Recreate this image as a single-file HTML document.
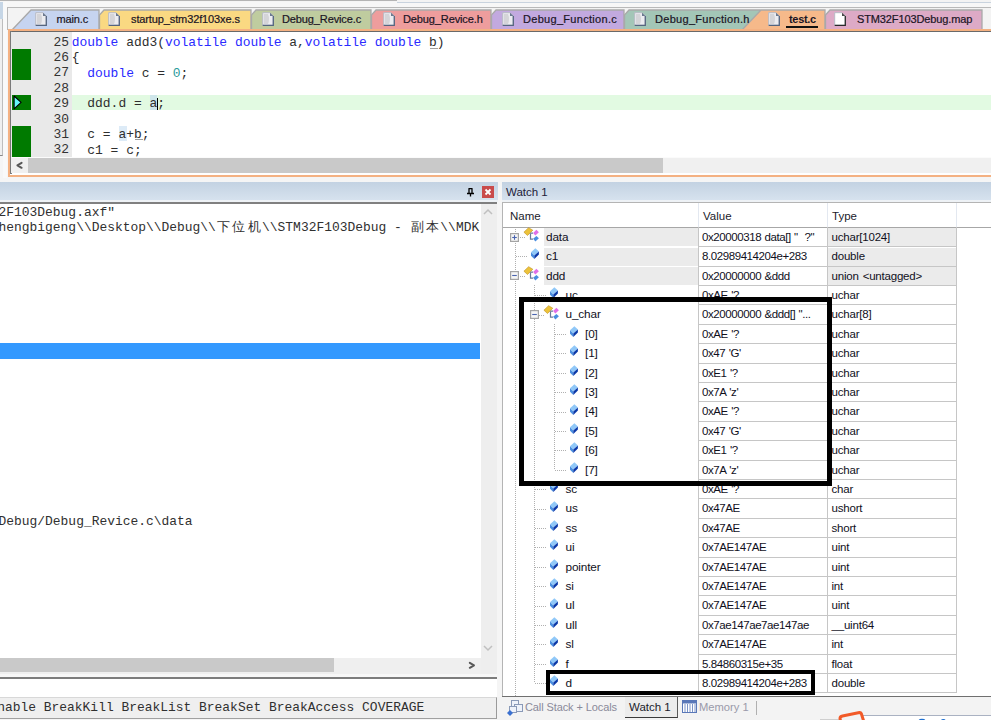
<!DOCTYPE html><html><head><meta charset="utf-8"><style>
html,body{margin:0;padding:0;}
body{width:991px;height:720px;overflow:hidden;position:relative;background:#f5f5f5;font-family:'Liberation Sans', sans-serif;}
div{box-sizing:border-box;}
.ui{font-family:'Liberation Sans', sans-serif;font-size:11px;color:#1b1b1b;line-height:14px;}
.mono{font-family:'Liberation Mono', monospace;font-size:12.95px;line-height:15.4px;color:#1a1a1a;}
.kw{color:#2a2aff;}
</style></head><body>
<div style="position:absolute;left:0px;top:0px;width:397.5px;height:1.4px;background:#f2f2f2;border-bottom:1px solid #b4b4b4;border-right:1px solid #b4b4b4"></div>
<div style="position:absolute;left:0px;top:2px;width:991px;height:5px;background:#f7f7f7"></div>
<div style="position:absolute;left:397px;top:0px;width:594px;height:3px;background:#f3f3f3;border-top:0;border-bottom:1px solid #c9d3de"></div>
<div style="position:absolute;left:0px;top:2px;width:3px;height:17px;background:#c6d6e6"></div>
<div style="position:absolute;left:0px;top:19px;width:3px;height:137px;background:#efefef;border-right:1px solid #bdbdbd;border-bottom:1px solid #8a8a8a"></div>
<div style="position:absolute;left:3px;top:2px;width:4px;height:176px;background:#f9f9f9"></div>
<div style="position:absolute;left:7px;top:7px;width:984px;height:23px;background:#f3f3f3;border-top:1px solid #b9b9b9;border-left:1px solid #b9b9b9"></div>
<svg style="position:absolute;left:12px;top:10px;overflow:visible" width="87" height="20"><polygon points="0,20 19,0 87,0 87,20" fill="#c6d4f0" stroke="#a9a9a9" stroke-width="1.3" /><rect x="-1" y="19" width="89" height="2" fill="#c6d4f0"/></svg>
<svg style="position:absolute;left:99px;top:10px;overflow:visible" width="152" height="20"><polygon points="0.5,20 0.5,5 5,0 152,0 152,20" fill="#fad982" stroke="#a9a9a9" stroke-width="1.3" /><rect x="-1" y="19" width="154" height="2" fill="#fad982"/></svg>
<svg style="position:absolute;left:251px;top:10px;overflow:visible" width="120" height="20"><polygon points="0.5,20 0.5,5 5,0 120,0 120,20" fill="#bfcc9f" stroke="#a9a9a9" stroke-width="1.3" /><rect x="-1" y="19" width="122" height="2" fill="#bfcc9f"/></svg>
<svg style="position:absolute;left:371px;top:10px;overflow:visible" width="120" height="20"><polygon points="0.5,20 0.5,5 5,0 120,0 120,20" fill="#ee9d9d" stroke="#a9a9a9" stroke-width="1.3" /><rect x="-1" y="19" width="122" height="2" fill="#ee9d9d"/></svg>
<svg style="position:absolute;left:491px;top:10px;overflow:visible" width="133" height="20"><polygon points="0.5,20 0.5,5 5,0 133,0 133,20" fill="#c2a9df" stroke="#a9a9a9" stroke-width="1.3" /><rect x="-1" y="19" width="135" height="2" fill="#c2a9df"/></svg>
<svg style="position:absolute;left:624px;top:10px;overflow:visible" width="136" height="20"><polygon points="0.5,20 0.5,5 5,0 136,0 136,20" fill="#a3c6b7" stroke="#a9a9a9" stroke-width="1.3" /><rect x="-1" y="19" width="138" height="2" fill="#a3c6b7"/></svg>
<svg style="position:absolute;left:742px;top:10px;overflow:visible" width="83" height="20"><polygon points="0,20 19,0 83,0 83,20" fill="#f6b98a" stroke="#a9a9a9" stroke-width="1.3" /><rect x="-1" y="19" width="85" height="2" fill="#f6b98a"/></svg>
<svg style="position:absolute;left:825px;top:10px;overflow:visible" width="157" height="20"><polygon points="0.5,20 0.5,5 5,0 157,0 157,20" fill="#ddaac6" stroke="#a9a9a9" stroke-width="1.3" /><rect x="-1" y="19" width="159" height="2" fill="#ddaac6"/></svg>
<svg style="position:absolute;left:35.3px;top:12px;overflow:visible" width="12" height="14" viewBox="0 0 12 14"><path d="M0.7 0.7 H8 L11.3 4 V13.3 H0.7 Z" fill="#ececf0" stroke="#b8bcc6" stroke-width="1"/><path d="M2 2 H6 Q8 7 6 12 H2 Z" fill="#d4d4d8"/><path d="M8 0.7 L11.3 4 H8 Z" fill="#55657f" opacity="0.85"/><path d="M11.3 4 V13.3 H0.7" fill="none" stroke="#55657f" stroke-width="1.3"/></svg>
<div style="position:absolute;left:56.5px;top:12.2px;white-space:pre;font-family:'Liberation Sans', sans-serif;font-size:11px;line-height:14px;color:#1a1424;-webkit-text-stroke:0.2px #1a1424;letter-spacing:-0.12px;">main.c</div>
<svg style="position:absolute;left:108.3px;top:12px;overflow:visible" width="12" height="14" viewBox="0 0 12 14"><path d="M0.7 0.7 H8 L11.3 4 V13.3 H0.7 Z" fill="#ececf0" stroke="#b8bcc6" stroke-width="1"/><path d="M2 2 H6 Q8 7 6 12 H2 Z" fill="#d4d4d8"/><path d="M8 0.7 L11.3 4 H8 Z" fill="#55657f" opacity="0.85"/><path d="M11.3 4 V13.3 H0.7" fill="none" stroke="#55657f" stroke-width="1.3"/></svg>
<div style="position:absolute;left:131px;top:12.2px;white-space:pre;font-family:'Liberation Sans', sans-serif;font-size:11px;line-height:14px;color:#1a1424;-webkit-text-stroke:0.2px #1a1424;letter-spacing:-0.12px;">startup_stm32f103xe.s</div>
<svg style="position:absolute;left:262.3px;top:12px;overflow:visible" width="12" height="14" viewBox="0 0 12 14"><path d="M0.7 0.7 H8 L11.3 4 V13.3 H0.7 Z" fill="#ececf0" stroke="#b8bcc6" stroke-width="1"/><path d="M2 2 H6 Q8 7 6 12 H2 Z" fill="#d4d4d8"/><path d="M8 0.7 L11.3 4 H8 Z" fill="#55657f" opacity="0.85"/><path d="M11.3 4 V13.3 H0.7" fill="none" stroke="#55657f" stroke-width="1.3"/></svg>
<div style="position:absolute;left:282px;top:12.2px;white-space:pre;font-family:'Liberation Sans', sans-serif;font-size:11px;line-height:14px;color:#1a1424;-webkit-text-stroke:0.2px #1a1424;letter-spacing:-0.12px;">Debug_Revice.c</div>
<svg style="position:absolute;left:383.3px;top:12px;overflow:visible" width="12" height="14" viewBox="0 0 12 14"><path d="M0.7 0.7 H8 L11.3 4 V13.3 H0.7 Z" fill="#ececf0" stroke="#b8bcc6" stroke-width="1"/><path d="M2 2 H6 Q8 7 6 12 H2 Z" fill="#d4d4d8"/><path d="M8 0.7 L11.3 4 H8 Z" fill="#55657f" opacity="0.85"/><path d="M11.3 4 V13.3 H0.7" fill="none" stroke="#55657f" stroke-width="1.3"/></svg>
<div style="position:absolute;left:403px;top:12.2px;white-space:pre;font-family:'Liberation Sans', sans-serif;font-size:11px;line-height:14px;color:#1a1424;-webkit-text-stroke:0.2px #1a1424;letter-spacing:-0.12px;">Debug_Revice.h</div>
<svg style="position:absolute;left:502.3px;top:12px;overflow:visible" width="12" height="14" viewBox="0 0 12 14"><path d="M0.7 0.7 H8 L11.3 4 V13.3 H0.7 Z" fill="#ececf0" stroke="#b8bcc6" stroke-width="1"/><path d="M2 2 H6 Q8 7 6 12 H2 Z" fill="#d4d4d8"/><path d="M8 0.7 L11.3 4 H8 Z" fill="#55657f" opacity="0.85"/><path d="M11.3 4 V13.3 H0.7" fill="none" stroke="#55657f" stroke-width="1.3"/></svg>
<div style="position:absolute;left:523px;top:12.2px;white-space:pre;font-family:'Liberation Sans', sans-serif;font-size:11px;line-height:14px;color:#1a1424;-webkit-text-stroke:0.2px #1a1424;letter-spacing:0.3px;">Debug_Function.c</div>
<svg style="position:absolute;left:634.3px;top:12px;overflow:visible" width="12" height="14" viewBox="0 0 12 14"><path d="M0.7 0.7 H8 L11.3 4 V13.3 H0.7 Z" fill="#ececf0" stroke="#b8bcc6" stroke-width="1"/><path d="M2 2 H6 Q8 7 6 12 H2 Z" fill="#d4d4d8"/><path d="M8 0.7 L11.3 4 H8 Z" fill="#55657f" opacity="0.85"/><path d="M11.3 4 V13.3 H0.7" fill="none" stroke="#55657f" stroke-width="1.3"/></svg>
<div style="position:absolute;left:655px;top:12.2px;white-space:pre;font-family:'Liberation Sans', sans-serif;font-size:11px;line-height:14px;color:#1a1424;-webkit-text-stroke:0.2px #1a1424;letter-spacing:0.3px;">Debug_Function.h</div>
<svg style="position:absolute;left:768.3px;top:12px;overflow:visible" width="12" height="14" viewBox="0 0 12 14"><path d="M0.7 0.7 H8 L11.3 4 V13.3 H0.7 Z" fill="#ececf0" stroke="#b8bcc6" stroke-width="1"/><path d="M2 2 H6 Q8 7 6 12 H2 Z" fill="#d4d4d8"/><path d="M8 0.7 L11.3 4 H8 Z" fill="#55657f" opacity="0.85"/><path d="M11.3 4 V13.3 H0.7" fill="none" stroke="#55657f" stroke-width="1.3"/></svg>
<div style="position:absolute;left:789px;top:12.2px;white-space:pre;font-family:'Liberation Sans', sans-serif;font-size:11px;line-height:14px;color:#1a1424;font-weight:bold;letter-spacing:-0.3px;">test.c</div>
<svg style="position:absolute;left:834.3px;top:12px;overflow:visible" width="12" height="14" viewBox="0 0 12 14"><path d="M0.7 0.7 H8 L11.3 4 V13.3 H0.7 Z" fill="#ffffff" stroke="#b8bcc6" stroke-width="1"/><path d="M8 0.7 L11.3 4 H8 Z" fill="#2a2a2a" opacity="0.85"/><path d="M11.3 4 V13.3 H0.7" fill="none" stroke="#2a2a2a" stroke-width="1.3"/></svg>
<div style="position:absolute;left:857px;top:12.2px;white-space:pre;font-family:'Liberation Sans', sans-serif;font-size:11px;line-height:14px;color:#1a1424;-webkit-text-stroke:0.2px #1a1424;letter-spacing:-0.12px;">STM32F103Debug.map</div>
<div style="position:absolute;left:786px;top:26px;width:32px;height:1.6px;background:#111"></div>
<div style="position:absolute;left:8px;top:29px;width:991px;height:148px;border:2px solid #f4b182;border-right:0;background:#fff"></div>
<div style="position:absolute;left:10px;top:31px;width:981px;height:1px;background:#6a6a6a"></div>
<div style="position:absolute;left:10px;top:31px;width:1.5px;height:143px;background:#7a7a7a"></div>
<div style="position:absolute;left:11px;top:32px;width:61px;height:124.8px;background:#e9e9e9"></div>
<div style="position:absolute;left:11.5px;top:48.9px;width:19.5px;height:30.8px;background:#007a00"></div>
<div style="position:absolute;left:11.5px;top:95.1px;width:19.5px;height:15.4px;background:#007a00"></div>
<div style="position:absolute;left:11.5px;top:125.9px;width:19.5px;height:30.8px;background:#007a00"></div>
<div style="position:absolute;left:72px;top:95.1px;width:919px;height:15.4px;background:#e2fae2"></div>
<svg style="position:absolute;left:13px;top:95px;overflow:visible" width="10" height="15" viewBox="0 0 10 15"><polygon points="1.1,1 8.1,7.4 1.1,13.8" fill="#66f6f8" stroke="#000" stroke-width="1.1" stroke-linejoin="round"/></svg>
<div style="position:absolute;left:150.2px;top:95.1px;width:6.8px;height:15.4px;background:#cfe6ea"></div>
<div style="position:absolute;left:119.2px;top:125.9px;width:7.8px;height:15.4px;background:#ddebf7"></div>
<div style="position:absolute;left:157.3px;top:97.6px;width:1.2px;height:12.4px;background:#000"></div>
<div style="position:absolute;left:134.6px;top:139px;width:8px;height:1px;background:#a0a0a0"></div>
<div style="position:absolute;left:429.5px;top:47.5px;width:8px;height:1px;background:#a0a0a0"></div>
<div style="position:absolute;left:71.8px;top:34.8px;white-space:pre;font-family:'Liberation Mono', monospace;font-size:12.95px;line-height:15.4px;color:#2e2e2e"><span class="kw">double</span> add3(<span class="kw">volatile</span> <span class="kw">double</span> a,<span class="kw">volatile</span> <span class="kw">double</span> b)</div>
<div style="position:absolute;left:53.46px;top:34.5px;white-space:pre;font-family:'Liberation Mono', monospace;font-size:12.95px;line-height:15.4px;color:#333333">25</div>
<div style="position:absolute;left:71.8px;top:50.199999999999996px;white-space:pre;font-family:'Liberation Mono', monospace;font-size:12.95px;line-height:15.4px;color:#2e2e2e">{</div>
<div style="position:absolute;left:53.46px;top:49.9px;white-space:pre;font-family:'Liberation Mono', monospace;font-size:12.95px;line-height:15.4px;color:#333333">26</div>
<div style="position:absolute;left:71.8px;top:65.6px;white-space:pre;font-family:'Liberation Mono', monospace;font-size:12.95px;line-height:15.4px;color:#2e2e2e">  <span class="kw">double</span> c = <span style="color:#2a9a9a">0</span>;</div>
<div style="position:absolute;left:53.46px;top:65.3px;white-space:pre;font-family:'Liberation Mono', monospace;font-size:12.95px;line-height:15.4px;color:#333333">27</div>
<div style="position:absolute;left:71.8px;top:81.0px;white-space:pre;font-family:'Liberation Mono', monospace;font-size:12.95px;line-height:15.4px;color:#2e2e2e"></div>
<div style="position:absolute;left:53.46px;top:80.7px;white-space:pre;font-family:'Liberation Mono', monospace;font-size:12.95px;line-height:15.4px;color:#333333">28</div>
<div style="position:absolute;left:71.8px;top:96.4px;white-space:pre;font-family:'Liberation Mono', monospace;font-size:12.95px;line-height:15.4px;color:#2e2e2e">  ddd.d = a;</div>
<div style="position:absolute;left:53.46px;top:96.1px;white-space:pre;font-family:'Liberation Mono', monospace;font-size:12.95px;line-height:15.4px;color:#333333">29</div>
<div style="position:absolute;left:71.8px;top:111.8px;white-space:pre;font-family:'Liberation Mono', monospace;font-size:12.95px;line-height:15.4px;color:#2e2e2e"></div>
<div style="position:absolute;left:53.46px;top:111.5px;white-space:pre;font-family:'Liberation Mono', monospace;font-size:12.95px;line-height:15.4px;color:#333333">30</div>
<div style="position:absolute;left:71.8px;top:127.2px;white-space:pre;font-family:'Liberation Mono', monospace;font-size:12.95px;line-height:15.4px;color:#2e2e2e">  c = a+b;</div>
<div style="position:absolute;left:53.46px;top:126.9px;white-space:pre;font-family:'Liberation Mono', monospace;font-size:12.95px;line-height:15.4px;color:#333333">31</div>
<div style="position:absolute;left:71.8px;top:142.6px;white-space:pre;font-family:'Liberation Mono', monospace;font-size:12.95px;line-height:15.4px;color:#2e2e2e">  c1 = c;</div>
<div style="position:absolute;left:53.46px;top:142.3px;white-space:pre;font-family:'Liberation Mono', monospace;font-size:12.95px;line-height:15.4px;color:#333333">32</div>
<div style="position:absolute;left:11px;top:156.8px;width:980px;height:16.7px;background:#f0f0f0;border-top:1.2px solid #fbfbfb"></div>
<div style="position:absolute;left:28px;top:158px;width:635px;height:14.5px;background:#c9c9c9"></div>
<svg style="position:absolute;left:15px;top:160px;overflow:visible" width="10" height="11" viewBox="0 0 10 11"><polyline points="6.6,2.8 2.4,5.3 6.6,7.8" fill="none" stroke="#585858" stroke-width="2" stroke-linejoin="round" stroke-linecap="round"/></svg>
<div style="position:absolute;left:0px;top:182px;width:498px;height:18px;background:linear-gradient(#c3d2e2,#d6e2ee)"></div>
<div style="position:absolute;left:0px;top:200px;width:498px;height:2px;background:#eef2f6"></div>
<div style="position:absolute;left:0px;top:202px;width:497px;height:2px;background:#808080"></div>
<svg style="position:absolute;left:466px;top:188px" width="9" height="9" viewBox="0 0 9 9"><path d="M2.5 0.5 H6.5 M3 0.5 V5 M6 0.5 V5 M1 5.5 H8 M4.5 5.5 V8.5" stroke="#000" stroke-width="1.3" fill="none"/></svg>
<div style="position:absolute;left:482px;top:186px;width:12px;height:12px;background:#c94b4b"></div>
<svg style="position:absolute;left:482px;top:186px" width="12" height="12" viewBox="0 0 12 12"><path d="M3.5 3.5 L8.5 8.5 M8.5 3.5 L3.5 8.5" stroke="#fff" stroke-width="1.8"/></svg>
<div style="position:absolute;left:0px;top:204px;width:480.5px;height:453.5px;background:#fff"></div>
<div style="position:absolute;left:0px;top:343.4px;width:479.5px;height:15.2px;background:#3399ff"></div>
<div style="position:absolute;left:480.5px;top:204px;width:16px;height:470px;background:#eeeeee"></div>
<svg style="position:absolute;left:483px;top:208px" width="10" height="8" viewBox="0 0 10 8"><polyline points="1,6 5,2 9,6" fill="none" stroke="#c0c0c0" stroke-width="1.5"/></svg>
<svg style="position:absolute;left:483px;top:644px" width="10" height="8" viewBox="0 0 10 8"><polyline points="1,2 5,6 9,2" fill="none" stroke="#c0c0c0" stroke-width="1.5"/></svg>
<div style="position:absolute;left:0px;top:657.5px;width:480.5px;height:16px;background:#efefef"></div>
<div style="position:absolute;left:0px;top:658px;width:334px;height:14px;background:#c9c9c9"></div>
<svg style="position:absolute;left:467px;top:660px;overflow:visible" width="10" height="11" viewBox="0 0 10 11"><polyline points="2.8,2.8 7,5.3 2.8,7.8" fill="none" stroke="#585858" stroke-width="2" stroke-linejoin="round" stroke-linecap="round"/></svg>
<div style="position:absolute;left:0px;top:673.5px;width:497px;height:4px;background:#f7f7f7"></div>
<div style="position:absolute;left:0px;top:677px;width:497px;height:1.8px;background:#7c7c7c"></div>
<div style="position:absolute;left:0px;top:679px;width:497px;height:18px;background:#fff"></div>
<div style="position:absolute;left:0px;top:697px;width:497px;height:22px;background:#efefef;border-top:1px solid #d8d8d8;border-right:1px solid #9a9a9a;border-bottom:1px solid #a0a0a0"></div>
<div style="position:absolute;left:-1.5px;top:204.8px;white-space:pre;font-family:'Liberation Mono', monospace;font-size:12.95px;line-height:15.4px;color:#303030">2F103Debug.axf"</div>
<div style="position:absolute;left:-1.5px;top:220.25px;white-space:pre;font-family:'Liberation Mono', monospace;font-size:12.95px;line-height:15.4px;color:#303030">hengbigeng\\Desktop\\Debug\\<span style="display:inline-block;width:15.4px;text-align:center">下</span><span style="display:inline-block;width:15.4px;text-align:center">位</span><span style="display:inline-block;width:15.4px;text-align:center">机</span>\\STM32F103Debug - <span style="display:inline-block;width:15.4px;text-align:center">副</span><span style="display:inline-block;width:15.4px;text-align:center">本</span>\\MDK</div>
<div style="position:absolute;left:-1.5px;top:513.8px;white-space:pre;font-family:'Liberation Mono', monospace;font-size:12.95px;line-height:15.4px;color:#303030">Debug/Debug_Revice.c\data</div>
<div style="position:absolute;left:-2.8px;top:700px;white-space:pre;font-family:'Liberation Mono', monospace;font-size:12.95px;line-height:15.4px;color:#303030">nable BreakKill BreakList BreakSet BreakAccess COVERAGE</div>
<div style="position:absolute;left:502px;top:182px;width:489px;height:18px;background:linear-gradient(#c3d2e2,#d6e2ee)"></div>
<div style="position:absolute;left:506px;top:184.5px;white-space:pre;font-family:'Liberation Sans', sans-serif;font-size:11.5px;line-height:14px;color:#22223a">Watch 1</div>
<div style="position:absolute;left:502px;top:200px;width:489px;height:2px;background:#eef2f6"></div>
<div style="position:absolute;left:502px;top:202px;width:489px;height:494px;background:#fff;border-top:1px solid #b4b4b4;border-left:1px solid #b4b4b4"></div>
<div style="position:absolute;left:510px;top:209px;white-space:pre;font-family:'Liberation Sans', sans-serif;font-size:11.5px;line-height:14px;color:#1b1b2b">Name</div>
<div style="position:absolute;left:703px;top:209px;white-space:pre;font-family:'Liberation Sans', sans-serif;font-size:11.5px;line-height:14px;color:#1b1b2b">Value</div>
<div style="position:absolute;left:832px;top:209px;white-space:pre;font-family:'Liberation Sans', sans-serif;font-size:11.5px;line-height:14px;color:#1b1b2b">Type</div>
<div style="position:absolute;left:698px;top:203px;width:1px;height:24px;background:#e3e8f0"></div>
<div style="position:absolute;left:827px;top:203px;width:1px;height:24px;background:#e3e8f0"></div>
<div style="position:absolute;left:956px;top:203px;width:1px;height:24px;background:#e3e8f0"></div>
<div style="position:absolute;left:503px;top:227px;width:488px;height:1px;background:#a7a7a7"></div>
<div style="position:absolute;left:514.5px;top:229px;width:1px;height:467px;background-image:linear-gradient(#b0b0b0 50%,transparent 50%);background-size:1px 2px;"></div>
<div style="position:absolute;left:534px;top:285.4px;width:1px;height:397.70000000000005px;background-image:linear-gradient(#b0b0b0 50%,transparent 50%);background-size:1px 2px;"></div>
<div style="position:absolute;left:553.5px;top:324.2px;width:1px;height:145.5px;background-image:linear-gradient(#b0b0b0 50%,transparent 50%);background-size:1px 2px;"></div>
<div style="position:absolute;left:543.5px;top:228.2px;width:155px;height:18.4px;background:#ebebeb"></div>
<div style="position:absolute;left:827.5px;top:228.2px;width:129px;height:18.4px;background:#ebebeb"></div>
<div style="position:absolute;left:543.5px;top:246.1px;width:155px;height:1px;background:#fff"></div>
<div style="position:absolute;left:698px;top:246.1px;width:259px;height:1px;background:#c6c6c6"></div>
<svg style="position:absolute;left:510.2px;top:232.59999999999997px" width="9" height="9" viewBox="0 0 9 9"><rect x="0.6" y="0.6" width="7.8" height="7.8" fill="#f6f6f6" stroke="#a4a4a4" stroke-width="1.2"/><path d="M2.2 4.5 H6.8" stroke="#4a64b0" stroke-width="1.1"/><path d="M4.5 2.2 V6.8" stroke="#4a64b0" stroke-width="1.1"/></svg>
<div style="position:absolute;left:519.5px;top:236.89999999999998px;width:5px;height:1px;background-image:linear-gradient(90deg,#b0b0b0 50%,transparent 50%);background-size:2px 1px;"></div>
<svg style="position:absolute;left:520.0px;top:227.2px;overflow:visible" width="20" height="16" viewBox="0 0 20 16"><polygon points="3.9,5.2 8.6,0.7 12.8,3.2 7.5,8.5" fill="#ecc23a" stroke="#c09020" stroke-width="0.6"/><path d="M10.5 6.2 H13 M10.5 6.2 V12.1 H13" stroke="#6a7a9a" stroke-width="1.2" fill="none"/><polygon points="13.1,6 16.4,2.8 18.9,5.2 15.4,8.5" fill="#e070e8"/><polygon points="13.1,11.8 16.4,8.9 18.9,11.2 15.4,14.6" fill="#4a8ee0"/></svg>
<div style="position:absolute;left:546.0px;top:229.7px;white-space:pre;font-family:'Liberation Sans', sans-serif;font-size:11.8px;line-height:14px;color:#10101c;letter-spacing:-0.15px">data</div>
<div style="position:absolute;left:702px;top:229.7px;white-space:pre;font-family:'Liberation Sans', sans-serif;font-size:11.5px;line-height:14px;color:#10101c;letter-spacing:-0.42px;word-spacing:0.6px">0x20000318 data[] "  ?"</div>
<div style="position:absolute;left:831.5px;top:229.7px;white-space:pre;font-family:'Liberation Sans', sans-serif;font-size:11.5px;line-height:14px;color:#10101c;letter-spacing:-0.2px;word-spacing:1px">uchar[1024]</div>
<div style="position:absolute;left:543.5px;top:247.6px;width:155px;height:18.4px;background:#ebebeb"></div>
<div style="position:absolute;left:827.5px;top:247.6px;width:129px;height:18.4px;background:#ebebeb"></div>
<div style="position:absolute;left:543.5px;top:265.5px;width:155px;height:1px;background:#fff"></div>
<div style="position:absolute;left:698px;top:265.5px;width:259px;height:1px;background:#c6c6c6"></div>
<div style="position:absolute;left:515.5px;top:256.3px;width:12px;height:1px;background-image:linear-gradient(90deg,#b0b0b0 50%,transparent 50%);background-size:2px 1px;"></div>
<svg style="position:absolute;left:530.8px;top:248.4px;overflow:visible" width="9" height="11" viewBox="0 0 9 11"><polygon points="4.4,0.2 7.9,3.5 3.3,7.5 0,4.3" fill="#90c8f8"/><polygon points="0,4.3 3.3,7.5 3.3,11 0,7.7" fill="#4a8ee0"/><polygon points="7.9,3.5 7.9,6.6 3.3,11 3.3,7.5" fill="#0a38a8"/></svg>
<div style="position:absolute;left:546.0px;top:249.1px;white-space:pre;font-family:'Liberation Sans', sans-serif;font-size:11.8px;line-height:14px;color:#10101c;letter-spacing:-0.15px">c1</div>
<div style="position:absolute;left:702px;top:249.1px;white-space:pre;font-family:'Liberation Sans', sans-serif;font-size:11.5px;line-height:14px;color:#10101c;letter-spacing:-0.42px;word-spacing:0.6px">8.02989414204e+283</div>
<div style="position:absolute;left:831.5px;top:249.1px;white-space:pre;font-family:'Liberation Sans', sans-serif;font-size:11.5px;line-height:14px;color:#10101c;letter-spacing:-0.2px;word-spacing:1px">double</div>
<div style="position:absolute;left:543.5px;top:267.0px;width:155px;height:18.4px;background:#ebebeb"></div>
<div style="position:absolute;left:827.5px;top:267.0px;width:129px;height:18.4px;background:#ebebeb"></div>
<div style="position:absolute;left:543.5px;top:284.9px;width:155px;height:1px;background:#fff"></div>
<div style="position:absolute;left:698px;top:284.9px;width:259px;height:1px;background:#c6c6c6"></div>
<svg style="position:absolute;left:510.2px;top:271.4px" width="9" height="9" viewBox="0 0 9 9"><rect x="0.6" y="0.6" width="7.8" height="7.8" fill="#f6f6f6" stroke="#a4a4a4" stroke-width="1.2"/><path d="M2.2 4.5 H6.8" stroke="#4a64b0" stroke-width="1.1"/></svg>
<div style="position:absolute;left:519.5px;top:275.7px;width:5px;height:1px;background-image:linear-gradient(90deg,#b0b0b0 50%,transparent 50%);background-size:2px 1px;"></div>
<svg style="position:absolute;left:520.0px;top:266.0px;overflow:visible" width="20" height="16" viewBox="0 0 20 16"><polygon points="3.9,5.2 8.6,0.7 12.8,3.2 7.5,8.5" fill="#ecc23a" stroke="#c09020" stroke-width="0.6"/><path d="M10.5 6.2 H13 M10.5 6.2 V12.1 H13" stroke="#6a7a9a" stroke-width="1.2" fill="none"/><polygon points="13.1,6 16.4,2.8 18.9,5.2 15.4,8.5" fill="#e070e8"/><polygon points="13.1,11.8 16.4,8.9 18.9,11.2 15.4,14.6" fill="#4a8ee0"/></svg>
<div style="position:absolute;left:546.0px;top:268.5px;white-space:pre;font-family:'Liberation Sans', sans-serif;font-size:11.8px;line-height:14px;color:#10101c;letter-spacing:-0.15px">ddd</div>
<div style="position:absolute;left:702px;top:268.5px;white-space:pre;font-family:'Liberation Sans', sans-serif;font-size:11.5px;line-height:14px;color:#10101c;letter-spacing:-0.42px;word-spacing:0.6px">0x20000000 &amp;ddd</div>
<div style="position:absolute;left:831.5px;top:268.5px;white-space:pre;font-family:'Liberation Sans', sans-serif;font-size:11.5px;line-height:14px;color:#10101c;letter-spacing:-0.2px;word-spacing:1px">union &lt;untagged&gt;</div>
<div style="position:absolute;left:698px;top:304.29999999999995px;width:259px;height:1px;background:#c6c6c6"></div>
<div style="position:absolute;left:535px;top:295.09999999999997px;width:12px;height:1px;background-image:linear-gradient(90deg,#b0b0b0 50%,transparent 50%);background-size:2px 1px;"></div>
<svg style="position:absolute;left:550.3px;top:287.2px;overflow:visible" width="9" height="11" viewBox="0 0 9 11"><polygon points="4.4,0.2 7.9,3.5 3.3,7.5 0,4.3" fill="#90c8f8"/><polygon points="0,4.3 3.3,7.5 3.3,11 0,7.7" fill="#4a8ee0"/><polygon points="7.9,3.5 7.9,6.6 3.3,11 3.3,7.5" fill="#0a38a8"/></svg>
<div style="position:absolute;left:565.5px;top:287.9px;white-space:pre;font-family:'Liberation Sans', sans-serif;font-size:11.8px;line-height:14px;color:#10101c;letter-spacing:-0.15px">uc</div>
<div style="position:absolute;left:702px;top:287.9px;white-space:pre;font-family:'Liberation Sans', sans-serif;font-size:11.5px;line-height:14px;color:#10101c;letter-spacing:-0.42px;word-spacing:0.6px">0xAE '?</div>
<div style="position:absolute;left:831.5px;top:287.9px;white-space:pre;font-family:'Liberation Sans', sans-serif;font-size:11.5px;line-height:14px;color:#10101c;letter-spacing:-0.2px;word-spacing:1px">uchar</div>
<div style="position:absolute;left:698px;top:323.69999999999993px;width:259px;height:1px;background:#c6c6c6"></div>
<svg style="position:absolute;left:529.7px;top:310.19999999999993px" width="9" height="9" viewBox="0 0 9 9"><rect x="0.6" y="0.6" width="7.8" height="7.8" fill="#f6f6f6" stroke="#a4a4a4" stroke-width="1.2"/><path d="M2.2 4.5 H6.8" stroke="#4a64b0" stroke-width="1.1"/></svg>
<div style="position:absolute;left:539px;top:314.49999999999994px;width:5px;height:1px;background-image:linear-gradient(90deg,#b0b0b0 50%,transparent 50%);background-size:2px 1px;"></div>
<svg style="position:absolute;left:539.5px;top:304.79999999999995px;overflow:visible" width="20" height="16" viewBox="0 0 20 16"><polygon points="3.9,5.2 8.6,0.7 12.8,3.2 7.5,8.5" fill="#ecc23a" stroke="#c09020" stroke-width="0.6"/><path d="M10.5 6.2 H13 M10.5 6.2 V12.1 H13" stroke="#6a7a9a" stroke-width="1.2" fill="none"/><polygon points="13.1,6 16.4,2.8 18.9,5.2 15.4,8.5" fill="#e070e8"/><polygon points="13.1,11.8 16.4,8.9 18.9,11.2 15.4,14.6" fill="#4a8ee0"/></svg>
<div style="position:absolute;left:565.5px;top:307.29999999999995px;white-space:pre;font-family:'Liberation Sans', sans-serif;font-size:11.8px;line-height:14px;color:#10101c;letter-spacing:-0.15px">u_char</div>
<div style="position:absolute;left:702px;top:307.29999999999995px;white-space:pre;font-family:'Liberation Sans', sans-serif;font-size:11.5px;line-height:14px;color:#10101c;letter-spacing:-0.42px;word-spacing:0.6px">0x20000000 &amp;ddd[] "...</div>
<div style="position:absolute;left:831.5px;top:307.29999999999995px;white-space:pre;font-family:'Liberation Sans', sans-serif;font-size:11.5px;line-height:14px;color:#10101c;letter-spacing:-0.2px;word-spacing:1px">uchar[8]</div>
<div style="position:absolute;left:698px;top:343.09999999999997px;width:259px;height:1px;background:#c6c6c6"></div>
<div style="position:absolute;left:554.5px;top:333.9px;width:12px;height:1px;background-image:linear-gradient(90deg,#b0b0b0 50%,transparent 50%);background-size:2px 1px;"></div>
<svg style="position:absolute;left:569.8px;top:326.0px;overflow:visible" width="9" height="11" viewBox="0 0 9 11"><polygon points="4.4,0.2 7.9,3.5 3.3,7.5 0,4.3" fill="#90c8f8"/><polygon points="0,4.3 3.3,7.5 3.3,11 0,7.7" fill="#4a8ee0"/><polygon points="7.9,3.5 7.9,6.6 3.3,11 3.3,7.5" fill="#0a38a8"/></svg>
<div style="position:absolute;left:585.0px;top:326.7px;white-space:pre;font-family:'Liberation Sans', sans-serif;font-size:11.8px;line-height:14px;color:#10101c;letter-spacing:-0.15px">[0]</div>
<div style="position:absolute;left:702px;top:326.7px;white-space:pre;font-family:'Liberation Sans', sans-serif;font-size:11.5px;line-height:14px;color:#10101c;letter-spacing:-0.42px;word-spacing:0.6px">0xAE '?</div>
<div style="position:absolute;left:831.5px;top:326.7px;white-space:pre;font-family:'Liberation Sans', sans-serif;font-size:11.5px;line-height:14px;color:#10101c;letter-spacing:-0.2px;word-spacing:1px">uchar</div>
<div style="position:absolute;left:698px;top:362.49999999999994px;width:259px;height:1px;background:#c6c6c6"></div>
<div style="position:absolute;left:554.5px;top:353.29999999999995px;width:12px;height:1px;background-image:linear-gradient(90deg,#b0b0b0 50%,transparent 50%);background-size:2px 1px;"></div>
<svg style="position:absolute;left:569.8px;top:345.4px;overflow:visible" width="9" height="11" viewBox="0 0 9 11"><polygon points="4.4,0.2 7.9,3.5 3.3,7.5 0,4.3" fill="#90c8f8"/><polygon points="0,4.3 3.3,7.5 3.3,11 0,7.7" fill="#4a8ee0"/><polygon points="7.9,3.5 7.9,6.6 3.3,11 3.3,7.5" fill="#0a38a8"/></svg>
<div style="position:absolute;left:585.0px;top:346.09999999999997px;white-space:pre;font-family:'Liberation Sans', sans-serif;font-size:11.8px;line-height:14px;color:#10101c;letter-spacing:-0.15px">[1]</div>
<div style="position:absolute;left:702px;top:346.09999999999997px;white-space:pre;font-family:'Liberation Sans', sans-serif;font-size:11.5px;line-height:14px;color:#10101c;letter-spacing:-0.42px;word-spacing:0.6px">0x47 'G'</div>
<div style="position:absolute;left:831.5px;top:346.09999999999997px;white-space:pre;font-family:'Liberation Sans', sans-serif;font-size:11.5px;line-height:14px;color:#10101c;letter-spacing:-0.2px;word-spacing:1px">uchar</div>
<div style="position:absolute;left:698px;top:381.9px;width:259px;height:1px;background:#c6c6c6"></div>
<div style="position:absolute;left:554.5px;top:372.7px;width:12px;height:1px;background-image:linear-gradient(90deg,#b0b0b0 50%,transparent 50%);background-size:2px 1px;"></div>
<svg style="position:absolute;left:569.8px;top:364.8px;overflow:visible" width="9" height="11" viewBox="0 0 9 11"><polygon points="4.4,0.2 7.9,3.5 3.3,7.5 0,4.3" fill="#90c8f8"/><polygon points="0,4.3 3.3,7.5 3.3,11 0,7.7" fill="#4a8ee0"/><polygon points="7.9,3.5 7.9,6.6 3.3,11 3.3,7.5" fill="#0a38a8"/></svg>
<div style="position:absolute;left:585.0px;top:365.5px;white-space:pre;font-family:'Liberation Sans', sans-serif;font-size:11.8px;line-height:14px;color:#10101c;letter-spacing:-0.15px">[2]</div>
<div style="position:absolute;left:702px;top:365.5px;white-space:pre;font-family:'Liberation Sans', sans-serif;font-size:11.5px;line-height:14px;color:#10101c;letter-spacing:-0.42px;word-spacing:0.6px">0xE1 '?</div>
<div style="position:absolute;left:831.5px;top:365.5px;white-space:pre;font-family:'Liberation Sans', sans-serif;font-size:11.5px;line-height:14px;color:#10101c;letter-spacing:-0.2px;word-spacing:1px">uchar</div>
<div style="position:absolute;left:698px;top:401.29999999999995px;width:259px;height:1px;background:#c6c6c6"></div>
<div style="position:absolute;left:554.5px;top:392.09999999999997px;width:12px;height:1px;background-image:linear-gradient(90deg,#b0b0b0 50%,transparent 50%);background-size:2px 1px;"></div>
<svg style="position:absolute;left:569.8px;top:384.2px;overflow:visible" width="9" height="11" viewBox="0 0 9 11"><polygon points="4.4,0.2 7.9,3.5 3.3,7.5 0,4.3" fill="#90c8f8"/><polygon points="0,4.3 3.3,7.5 3.3,11 0,7.7" fill="#4a8ee0"/><polygon points="7.9,3.5 7.9,6.6 3.3,11 3.3,7.5" fill="#0a38a8"/></svg>
<div style="position:absolute;left:585.0px;top:384.9px;white-space:pre;font-family:'Liberation Sans', sans-serif;font-size:11.8px;line-height:14px;color:#10101c;letter-spacing:-0.15px">[3]</div>
<div style="position:absolute;left:702px;top:384.9px;white-space:pre;font-family:'Liberation Sans', sans-serif;font-size:11.5px;line-height:14px;color:#10101c;letter-spacing:-0.42px;word-spacing:0.6px">0x7A 'z'</div>
<div style="position:absolute;left:831.5px;top:384.9px;white-space:pre;font-family:'Liberation Sans', sans-serif;font-size:11.5px;line-height:14px;color:#10101c;letter-spacing:-0.2px;word-spacing:1px">uchar</div>
<div style="position:absolute;left:698px;top:420.69999999999993px;width:259px;height:1px;background:#c6c6c6"></div>
<div style="position:absolute;left:554.5px;top:411.49999999999994px;width:12px;height:1px;background-image:linear-gradient(90deg,#b0b0b0 50%,transparent 50%);background-size:2px 1px;"></div>
<svg style="position:absolute;left:569.8px;top:403.59999999999997px;overflow:visible" width="9" height="11" viewBox="0 0 9 11"><polygon points="4.4,0.2 7.9,3.5 3.3,7.5 0,4.3" fill="#90c8f8"/><polygon points="0,4.3 3.3,7.5 3.3,11 0,7.7" fill="#4a8ee0"/><polygon points="7.9,3.5 7.9,6.6 3.3,11 3.3,7.5" fill="#0a38a8"/></svg>
<div style="position:absolute;left:585.0px;top:404.29999999999995px;white-space:pre;font-family:'Liberation Sans', sans-serif;font-size:11.8px;line-height:14px;color:#10101c;letter-spacing:-0.15px">[4]</div>
<div style="position:absolute;left:702px;top:404.29999999999995px;white-space:pre;font-family:'Liberation Sans', sans-serif;font-size:11.5px;line-height:14px;color:#10101c;letter-spacing:-0.42px;word-spacing:0.6px">0xAE '?</div>
<div style="position:absolute;left:831.5px;top:404.29999999999995px;white-space:pre;font-family:'Liberation Sans', sans-serif;font-size:11.5px;line-height:14px;color:#10101c;letter-spacing:-0.2px;word-spacing:1px">uchar</div>
<div style="position:absolute;left:698px;top:440.09999999999997px;width:259px;height:1px;background:#c6c6c6"></div>
<div style="position:absolute;left:554.5px;top:430.9px;width:12px;height:1px;background-image:linear-gradient(90deg,#b0b0b0 50%,transparent 50%);background-size:2px 1px;"></div>
<svg style="position:absolute;left:569.8px;top:423.0px;overflow:visible" width="9" height="11" viewBox="0 0 9 11"><polygon points="4.4,0.2 7.9,3.5 3.3,7.5 0,4.3" fill="#90c8f8"/><polygon points="0,4.3 3.3,7.5 3.3,11 0,7.7" fill="#4a8ee0"/><polygon points="7.9,3.5 7.9,6.6 3.3,11 3.3,7.5" fill="#0a38a8"/></svg>
<div style="position:absolute;left:585.0px;top:423.7px;white-space:pre;font-family:'Liberation Sans', sans-serif;font-size:11.8px;line-height:14px;color:#10101c;letter-spacing:-0.15px">[5]</div>
<div style="position:absolute;left:702px;top:423.7px;white-space:pre;font-family:'Liberation Sans', sans-serif;font-size:11.5px;line-height:14px;color:#10101c;letter-spacing:-0.42px;word-spacing:0.6px">0x47 'G'</div>
<div style="position:absolute;left:831.5px;top:423.7px;white-space:pre;font-family:'Liberation Sans', sans-serif;font-size:11.5px;line-height:14px;color:#10101c;letter-spacing:-0.2px;word-spacing:1px">uchar</div>
<div style="position:absolute;left:698px;top:459.49999999999994px;width:259px;height:1px;background:#c6c6c6"></div>
<div style="position:absolute;left:554.5px;top:450.29999999999995px;width:12px;height:1px;background-image:linear-gradient(90deg,#b0b0b0 50%,transparent 50%);background-size:2px 1px;"></div>
<svg style="position:absolute;left:569.8px;top:442.4px;overflow:visible" width="9" height="11" viewBox="0 0 9 11"><polygon points="4.4,0.2 7.9,3.5 3.3,7.5 0,4.3" fill="#90c8f8"/><polygon points="0,4.3 3.3,7.5 3.3,11 0,7.7" fill="#4a8ee0"/><polygon points="7.9,3.5 7.9,6.6 3.3,11 3.3,7.5" fill="#0a38a8"/></svg>
<div style="position:absolute;left:585.0px;top:443.09999999999997px;white-space:pre;font-family:'Liberation Sans', sans-serif;font-size:11.8px;line-height:14px;color:#10101c;letter-spacing:-0.15px">[6]</div>
<div style="position:absolute;left:702px;top:443.09999999999997px;white-space:pre;font-family:'Liberation Sans', sans-serif;font-size:11.5px;line-height:14px;color:#10101c;letter-spacing:-0.42px;word-spacing:0.6px">0xE1 '?</div>
<div style="position:absolute;left:831.5px;top:443.09999999999997px;white-space:pre;font-family:'Liberation Sans', sans-serif;font-size:11.5px;line-height:14px;color:#10101c;letter-spacing:-0.2px;word-spacing:1px">uchar</div>
<div style="position:absolute;left:698px;top:478.9px;width:259px;height:1px;background:#c6c6c6"></div>
<div style="position:absolute;left:554.5px;top:469.7px;width:12px;height:1px;background-image:linear-gradient(90deg,#b0b0b0 50%,transparent 50%);background-size:2px 1px;"></div>
<svg style="position:absolute;left:569.8px;top:461.8px;overflow:visible" width="9" height="11" viewBox="0 0 9 11"><polygon points="4.4,0.2 7.9,3.5 3.3,7.5 0,4.3" fill="#90c8f8"/><polygon points="0,4.3 3.3,7.5 3.3,11 0,7.7" fill="#4a8ee0"/><polygon points="7.9,3.5 7.9,6.6 3.3,11 3.3,7.5" fill="#0a38a8"/></svg>
<div style="position:absolute;left:585.0px;top:462.5px;white-space:pre;font-family:'Liberation Sans', sans-serif;font-size:11.8px;line-height:14px;color:#10101c;letter-spacing:-0.15px">[7]</div>
<div style="position:absolute;left:702px;top:462.5px;white-space:pre;font-family:'Liberation Sans', sans-serif;font-size:11.5px;line-height:14px;color:#10101c;letter-spacing:-0.42px;word-spacing:0.6px">0x7A 'z'</div>
<div style="position:absolute;left:831.5px;top:462.5px;white-space:pre;font-family:'Liberation Sans', sans-serif;font-size:11.5px;line-height:14px;color:#10101c;letter-spacing:-0.2px;word-spacing:1px">uchar</div>
<div style="position:absolute;left:698px;top:498.29999999999995px;width:259px;height:1px;background:#c6c6c6"></div>
<div style="position:absolute;left:535px;top:489.09999999999997px;width:12px;height:1px;background-image:linear-gradient(90deg,#b0b0b0 50%,transparent 50%);background-size:2px 1px;"></div>
<svg style="position:absolute;left:550.3px;top:481.2px;overflow:visible" width="9" height="11" viewBox="0 0 9 11"><polygon points="4.4,0.2 7.9,3.5 3.3,7.5 0,4.3" fill="#90c8f8"/><polygon points="0,4.3 3.3,7.5 3.3,11 0,7.7" fill="#4a8ee0"/><polygon points="7.9,3.5 7.9,6.6 3.3,11 3.3,7.5" fill="#0a38a8"/></svg>
<div style="position:absolute;left:565.5px;top:481.9px;white-space:pre;font-family:'Liberation Sans', sans-serif;font-size:11.8px;line-height:14px;color:#10101c;letter-spacing:-0.15px">sc</div>
<div style="position:absolute;left:702px;top:481.9px;white-space:pre;font-family:'Liberation Sans', sans-serif;font-size:11.5px;line-height:14px;color:#10101c;letter-spacing:-0.42px;word-spacing:0.6px">0xAE '?</div>
<div style="position:absolute;left:831.5px;top:481.9px;white-space:pre;font-family:'Liberation Sans', sans-serif;font-size:11.5px;line-height:14px;color:#10101c;letter-spacing:-0.2px;word-spacing:1px">char</div>
<div style="position:absolute;left:698px;top:517.6999999999999px;width:259px;height:1px;background:#c6c6c6"></div>
<div style="position:absolute;left:535px;top:508.49999999999994px;width:12px;height:1px;background-image:linear-gradient(90deg,#b0b0b0 50%,transparent 50%);background-size:2px 1px;"></div>
<svg style="position:absolute;left:550.3px;top:500.59999999999997px;overflow:visible" width="9" height="11" viewBox="0 0 9 11"><polygon points="4.4,0.2 7.9,3.5 3.3,7.5 0,4.3" fill="#90c8f8"/><polygon points="0,4.3 3.3,7.5 3.3,11 0,7.7" fill="#4a8ee0"/><polygon points="7.9,3.5 7.9,6.6 3.3,11 3.3,7.5" fill="#0a38a8"/></svg>
<div style="position:absolute;left:565.5px;top:501.29999999999995px;white-space:pre;font-family:'Liberation Sans', sans-serif;font-size:11.8px;line-height:14px;color:#10101c;letter-spacing:-0.15px">us</div>
<div style="position:absolute;left:702px;top:501.29999999999995px;white-space:pre;font-family:'Liberation Sans', sans-serif;font-size:11.5px;line-height:14px;color:#10101c;letter-spacing:-0.42px;word-spacing:0.6px">0x47AE</div>
<div style="position:absolute;left:831.5px;top:501.29999999999995px;white-space:pre;font-family:'Liberation Sans', sans-serif;font-size:11.5px;line-height:14px;color:#10101c;letter-spacing:-0.2px;word-spacing:1px">ushort</div>
<div style="position:absolute;left:698px;top:537.1px;width:259px;height:1px;background:#c6c6c6"></div>
<div style="position:absolute;left:535px;top:527.9000000000001px;width:12px;height:1px;background-image:linear-gradient(90deg,#b0b0b0 50%,transparent 50%);background-size:2px 1px;"></div>
<svg style="position:absolute;left:550.3px;top:520.0000000000001px;overflow:visible" width="9" height="11" viewBox="0 0 9 11"><polygon points="4.4,0.2 7.9,3.5 3.3,7.5 0,4.3" fill="#90c8f8"/><polygon points="0,4.3 3.3,7.5 3.3,11 0,7.7" fill="#4a8ee0"/><polygon points="7.9,3.5 7.9,6.6 3.3,11 3.3,7.5" fill="#0a38a8"/></svg>
<div style="position:absolute;left:565.5px;top:520.7px;white-space:pre;font-family:'Liberation Sans', sans-serif;font-size:11.8px;line-height:14px;color:#10101c;letter-spacing:-0.15px">ss</div>
<div style="position:absolute;left:702px;top:520.7px;white-space:pre;font-family:'Liberation Sans', sans-serif;font-size:11.5px;line-height:14px;color:#10101c;letter-spacing:-0.42px;word-spacing:0.6px">0x47AE</div>
<div style="position:absolute;left:831.5px;top:520.7px;white-space:pre;font-family:'Liberation Sans', sans-serif;font-size:11.5px;line-height:14px;color:#10101c;letter-spacing:-0.2px;word-spacing:1px">short</div>
<div style="position:absolute;left:698px;top:556.4999999999999px;width:259px;height:1px;background:#c6c6c6"></div>
<div style="position:absolute;left:535px;top:547.3px;width:12px;height:1px;background-image:linear-gradient(90deg,#b0b0b0 50%,transparent 50%);background-size:2px 1px;"></div>
<svg style="position:absolute;left:550.3px;top:539.4px;overflow:visible" width="9" height="11" viewBox="0 0 9 11"><polygon points="4.4,0.2 7.9,3.5 3.3,7.5 0,4.3" fill="#90c8f8"/><polygon points="0,4.3 3.3,7.5 3.3,11 0,7.7" fill="#4a8ee0"/><polygon points="7.9,3.5 7.9,6.6 3.3,11 3.3,7.5" fill="#0a38a8"/></svg>
<div style="position:absolute;left:565.5px;top:540.0999999999999px;white-space:pre;font-family:'Liberation Sans', sans-serif;font-size:11.8px;line-height:14px;color:#10101c;letter-spacing:-0.15px">ui</div>
<div style="position:absolute;left:702px;top:540.0999999999999px;white-space:pre;font-family:'Liberation Sans', sans-serif;font-size:11.5px;line-height:14px;color:#10101c;letter-spacing:-0.42px;word-spacing:0.6px">0x7AE147AE</div>
<div style="position:absolute;left:831.5px;top:540.0999999999999px;white-space:pre;font-family:'Liberation Sans', sans-serif;font-size:11.5px;line-height:14px;color:#10101c;letter-spacing:-0.2px;word-spacing:1px">uint</div>
<div style="position:absolute;left:698px;top:575.9px;width:259px;height:1px;background:#c6c6c6"></div>
<div style="position:absolute;left:535px;top:566.7px;width:12px;height:1px;background-image:linear-gradient(90deg,#b0b0b0 50%,transparent 50%);background-size:2px 1px;"></div>
<svg style="position:absolute;left:550.3px;top:558.8000000000001px;overflow:visible" width="9" height="11" viewBox="0 0 9 11"><polygon points="4.4,0.2 7.9,3.5 3.3,7.5 0,4.3" fill="#90c8f8"/><polygon points="0,4.3 3.3,7.5 3.3,11 0,7.7" fill="#4a8ee0"/><polygon points="7.9,3.5 7.9,6.6 3.3,11 3.3,7.5" fill="#0a38a8"/></svg>
<div style="position:absolute;left:565.5px;top:559.5px;white-space:pre;font-family:'Liberation Sans', sans-serif;font-size:11.8px;line-height:14px;color:#10101c;letter-spacing:-0.15px">pointer</div>
<div style="position:absolute;left:702px;top:559.5px;white-space:pre;font-family:'Liberation Sans', sans-serif;font-size:11.5px;line-height:14px;color:#10101c;letter-spacing:-0.42px;word-spacing:0.6px">0x7AE147AE</div>
<div style="position:absolute;left:831.5px;top:559.5px;white-space:pre;font-family:'Liberation Sans', sans-serif;font-size:11.5px;line-height:14px;color:#10101c;letter-spacing:-0.2px;word-spacing:1px">uint</div>
<div style="position:absolute;left:698px;top:595.3px;width:259px;height:1px;background:#c6c6c6"></div>
<div style="position:absolute;left:535px;top:586.1px;width:12px;height:1px;background-image:linear-gradient(90deg,#b0b0b0 50%,transparent 50%);background-size:2px 1px;"></div>
<svg style="position:absolute;left:550.3px;top:578.2px;overflow:visible" width="9" height="11" viewBox="0 0 9 11"><polygon points="4.4,0.2 7.9,3.5 3.3,7.5 0,4.3" fill="#90c8f8"/><polygon points="0,4.3 3.3,7.5 3.3,11 0,7.7" fill="#4a8ee0"/><polygon points="7.9,3.5 7.9,6.6 3.3,11 3.3,7.5" fill="#0a38a8"/></svg>
<div style="position:absolute;left:565.5px;top:578.9px;white-space:pre;font-family:'Liberation Sans', sans-serif;font-size:11.8px;line-height:14px;color:#10101c;letter-spacing:-0.15px">si</div>
<div style="position:absolute;left:702px;top:578.9px;white-space:pre;font-family:'Liberation Sans', sans-serif;font-size:11.5px;line-height:14px;color:#10101c;letter-spacing:-0.42px;word-spacing:0.6px">0x7AE147AE</div>
<div style="position:absolute;left:831.5px;top:578.9px;white-space:pre;font-family:'Liberation Sans', sans-serif;font-size:11.5px;line-height:14px;color:#10101c;letter-spacing:-0.2px;word-spacing:1px">int</div>
<div style="position:absolute;left:698px;top:614.6999999999999px;width:259px;height:1px;background:#c6c6c6"></div>
<div style="position:absolute;left:535px;top:605.5px;width:12px;height:1px;background-image:linear-gradient(90deg,#b0b0b0 50%,transparent 50%);background-size:2px 1px;"></div>
<svg style="position:absolute;left:550.3px;top:597.6px;overflow:visible" width="9" height="11" viewBox="0 0 9 11"><polygon points="4.4,0.2 7.9,3.5 3.3,7.5 0,4.3" fill="#90c8f8"/><polygon points="0,4.3 3.3,7.5 3.3,11 0,7.7" fill="#4a8ee0"/><polygon points="7.9,3.5 7.9,6.6 3.3,11 3.3,7.5" fill="#0a38a8"/></svg>
<div style="position:absolute;left:565.5px;top:598.3px;white-space:pre;font-family:'Liberation Sans', sans-serif;font-size:11.8px;line-height:14px;color:#10101c;letter-spacing:-0.15px">ul</div>
<div style="position:absolute;left:702px;top:598.3px;white-space:pre;font-family:'Liberation Sans', sans-serif;font-size:11.5px;line-height:14px;color:#10101c;letter-spacing:-0.42px;word-spacing:0.6px">0x7AE147AE</div>
<div style="position:absolute;left:831.5px;top:598.3px;white-space:pre;font-family:'Liberation Sans', sans-serif;font-size:11.5px;line-height:14px;color:#10101c;letter-spacing:-0.2px;word-spacing:1px">uint</div>
<div style="position:absolute;left:698px;top:634.1px;width:259px;height:1px;background:#c6c6c6"></div>
<div style="position:absolute;left:535px;top:624.9000000000001px;width:12px;height:1px;background-image:linear-gradient(90deg,#b0b0b0 50%,transparent 50%);background-size:2px 1px;"></div>
<svg style="position:absolute;left:550.3px;top:617.0000000000001px;overflow:visible" width="9" height="11" viewBox="0 0 9 11"><polygon points="4.4,0.2 7.9,3.5 3.3,7.5 0,4.3" fill="#90c8f8"/><polygon points="0,4.3 3.3,7.5 3.3,11 0,7.7" fill="#4a8ee0"/><polygon points="7.9,3.5 7.9,6.6 3.3,11 3.3,7.5" fill="#0a38a8"/></svg>
<div style="position:absolute;left:565.5px;top:617.7px;white-space:pre;font-family:'Liberation Sans', sans-serif;font-size:11.8px;line-height:14px;color:#10101c;letter-spacing:-0.15px">ull</div>
<div style="position:absolute;left:702px;top:617.7px;white-space:pre;font-family:'Liberation Sans', sans-serif;font-size:11.5px;line-height:14px;color:#10101c;letter-spacing:-0.42px;word-spacing:0.6px">0x7ae147ae7ae147ae</div>
<div style="position:absolute;left:831.5px;top:617.7px;white-space:pre;font-family:'Liberation Sans', sans-serif;font-size:11.5px;line-height:14px;color:#10101c;letter-spacing:-0.2px;word-spacing:1px">__uint64</div>
<div style="position:absolute;left:698px;top:653.4999999999999px;width:259px;height:1px;background:#c6c6c6"></div>
<div style="position:absolute;left:535px;top:644.3px;width:12px;height:1px;background-image:linear-gradient(90deg,#b0b0b0 50%,transparent 50%);background-size:2px 1px;"></div>
<svg style="position:absolute;left:550.3px;top:636.4px;overflow:visible" width="9" height="11" viewBox="0 0 9 11"><polygon points="4.4,0.2 7.9,3.5 3.3,7.5 0,4.3" fill="#90c8f8"/><polygon points="0,4.3 3.3,7.5 3.3,11 0,7.7" fill="#4a8ee0"/><polygon points="7.9,3.5 7.9,6.6 3.3,11 3.3,7.5" fill="#0a38a8"/></svg>
<div style="position:absolute;left:565.5px;top:637.0999999999999px;white-space:pre;font-family:'Liberation Sans', sans-serif;font-size:11.8px;line-height:14px;color:#10101c;letter-spacing:-0.15px">sl</div>
<div style="position:absolute;left:702px;top:637.0999999999999px;white-space:pre;font-family:'Liberation Sans', sans-serif;font-size:11.5px;line-height:14px;color:#10101c;letter-spacing:-0.42px;word-spacing:0.6px">0x7AE147AE</div>
<div style="position:absolute;left:831.5px;top:637.0999999999999px;white-space:pre;font-family:'Liberation Sans', sans-serif;font-size:11.5px;line-height:14px;color:#10101c;letter-spacing:-0.2px;word-spacing:1px">int</div>
<div style="position:absolute;left:698px;top:672.9px;width:259px;height:1px;background:#c6c6c6"></div>
<div style="position:absolute;left:535px;top:663.7px;width:12px;height:1px;background-image:linear-gradient(90deg,#b0b0b0 50%,transparent 50%);background-size:2px 1px;"></div>
<svg style="position:absolute;left:550.3px;top:655.8000000000001px;overflow:visible" width="9" height="11" viewBox="0 0 9 11"><polygon points="4.4,0.2 7.9,3.5 3.3,7.5 0,4.3" fill="#90c8f8"/><polygon points="0,4.3 3.3,7.5 3.3,11 0,7.7" fill="#4a8ee0"/><polygon points="7.9,3.5 7.9,6.6 3.3,11 3.3,7.5" fill="#0a38a8"/></svg>
<div style="position:absolute;left:565.5px;top:656.5px;white-space:pre;font-family:'Liberation Sans', sans-serif;font-size:11.8px;line-height:14px;color:#10101c;letter-spacing:-0.15px">f</div>
<div style="position:absolute;left:702px;top:656.5px;white-space:pre;font-family:'Liberation Sans', sans-serif;font-size:11.5px;line-height:14px;color:#10101c;letter-spacing:-0.42px;word-spacing:0.6px">5.84860315e+35</div>
<div style="position:absolute;left:831.5px;top:656.5px;white-space:pre;font-family:'Liberation Sans', sans-serif;font-size:11.5px;line-height:14px;color:#10101c;letter-spacing:-0.2px;word-spacing:1px">float</div>
<div style="position:absolute;left:698px;top:692.3px;width:259px;height:1px;background:#c6c6c6"></div>
<div style="position:absolute;left:535px;top:683.1px;width:12px;height:1px;background-image:linear-gradient(90deg,#b0b0b0 50%,transparent 50%);background-size:2px 1px;"></div>
<svg style="position:absolute;left:550.3px;top:675.2px;overflow:visible" width="9" height="11" viewBox="0 0 9 11"><polygon points="4.4,0.2 7.9,3.5 3.3,7.5 0,4.3" fill="#90c8f8"/><polygon points="0,4.3 3.3,7.5 3.3,11 0,7.7" fill="#4a8ee0"/><polygon points="7.9,3.5 7.9,6.6 3.3,11 3.3,7.5" fill="#0a38a8"/></svg>
<div style="position:absolute;left:565.5px;top:675.9px;white-space:pre;font-family:'Liberation Sans', sans-serif;font-size:11.8px;line-height:14px;color:#10101c;letter-spacing:-0.15px">d</div>
<div style="position:absolute;left:702px;top:675.9px;white-space:pre;font-family:'Liberation Sans', sans-serif;font-size:11.5px;line-height:14px;color:#10101c;letter-spacing:-0.42px;word-spacing:0.6px">8.02989414204e+283</div>
<div style="position:absolute;left:831.5px;top:675.9px;white-space:pre;font-family:'Liberation Sans', sans-serif;font-size:11.5px;line-height:14px;color:#10101c;letter-spacing:-0.2px;word-spacing:1px">double</div>
<div style="position:absolute;left:698px;top:227px;width:1px;height:465.79999999999995px;background:#c6c6c6"></div>
<div style="position:absolute;left:827px;top:227px;width:1px;height:465.79999999999995px;background:#c6c6c6"></div>
<div style="position:absolute;left:956px;top:227px;width:1px;height:465.79999999999995px;background:#c6c6c6"></div>
<div style="position:absolute;left:502px;top:696px;width:489px;height:1.5px;background:#6f6f6f"></div>
<div style="position:absolute;left:497px;top:697px;width:494px;height:23px;background:#f3f3f3"></div>
<svg style="position:absolute;left:507px;top:700px" width="17" height="16" viewBox="0 0 17 16"><rect x="4.5" y="0.5" width="7" height="6" fill="#eef2fa" stroke="#8a9ab8"/><rect x="7.5" y="4.5" width="8" height="7" fill="#eef2fa" stroke="#8a9ab8"/><rect x="2.5" y="6.5" width="7" height="6" fill="#eef2fa" stroke="#8a9ab8"/><polygon points="3,10 6,13 3,16 0,13" fill="#3a70d0"/></svg>
<div style="position:absolute;left:525px;top:700px;white-space:pre;font-family:'Liberation Sans', sans-serif;font-size:11px;line-height:14px;color:#8a8a9a;letter-spacing:-0.1px">Call Stack + Locals</div>
<div style="position:absolute;left:624.5px;top:697px;width:53px;height:21px;background:#ececec;border-right:1.5px solid #5a5a5a;border-bottom:1.5px solid #3a3a3a"></div>
<div style="position:absolute;left:629px;top:700px;white-space:pre;font-family:'Liberation Sans', sans-serif;font-size:11.5px;line-height:14px;color:#1b1b2b">Watch 1</div>
<svg style="position:absolute;left:682px;top:700px" width="15" height="13" viewBox="0 0 15 13"><rect x="0.5" y="0.5" width="14" height="12" fill="#fff" stroke="#5a78b8"/><rect x="0.5" y="0.5" width="14" height="3" fill="#5a78b8"/><path d="M3 4 V12 M5.5 4 V12 M8 4 V12 M10.5 4 V12 M13 4 V12" stroke="#5a78b8" stroke-width="0.8"/></svg>
<div style="position:absolute;left:699px;top:700px;white-space:pre;font-family:'Liberation Sans', sans-serif;font-size:11.2px;line-height:14px;color:#9a9aaa">Memory 1</div>
<div style="position:absolute;left:756px;top:701px;width:1px;height:14px;background:#b0b0b0"></div>
<div style="position:absolute;left:519px;top:297px;width:313px;height:189px;border:5px solid #000"></div>
<div style="position:absolute;left:546px;top:670px;width:269px;height:24.5px;border:4.5px solid #000"></div>
<div style="position:absolute;left:862px;top:715px;width:129px;height:1.2px;background:#aab2c2"></div>
<div style="position:absolute;left:862px;top:716.2px;width:129px;height:3.8px;background:#ffffff"></div>
<div style="position:absolute;left:820px;top:719px;width:20px;height:1px;background:#cfcfcf"></div>
<svg style="position:absolute;left:836px;top:710px;overflow:visible" width="30" height="10" viewBox="0 0 30 10"><path d="M4.5 10.5 L4 8.5 Q4 6.5 6.5 6 L23.5 2.5 Q24.8 2.4 25.3 3.6 L27.5 10.5" fill="none" stroke="#f25a28" stroke-width="3"/></svg>
<svg style="position:absolute;left:915px;top:716px;overflow:visible" width="40" height="4" viewBox="0 0 40 4"><ellipse cx="7" cy="4.6" rx="3.4" ry="1.8" fill="#1e6fd0"/><ellipse cx="28.3" cy="4.6" rx="2.3" ry="1.7" fill="#1e6fd0"/></svg>
</body></html>
